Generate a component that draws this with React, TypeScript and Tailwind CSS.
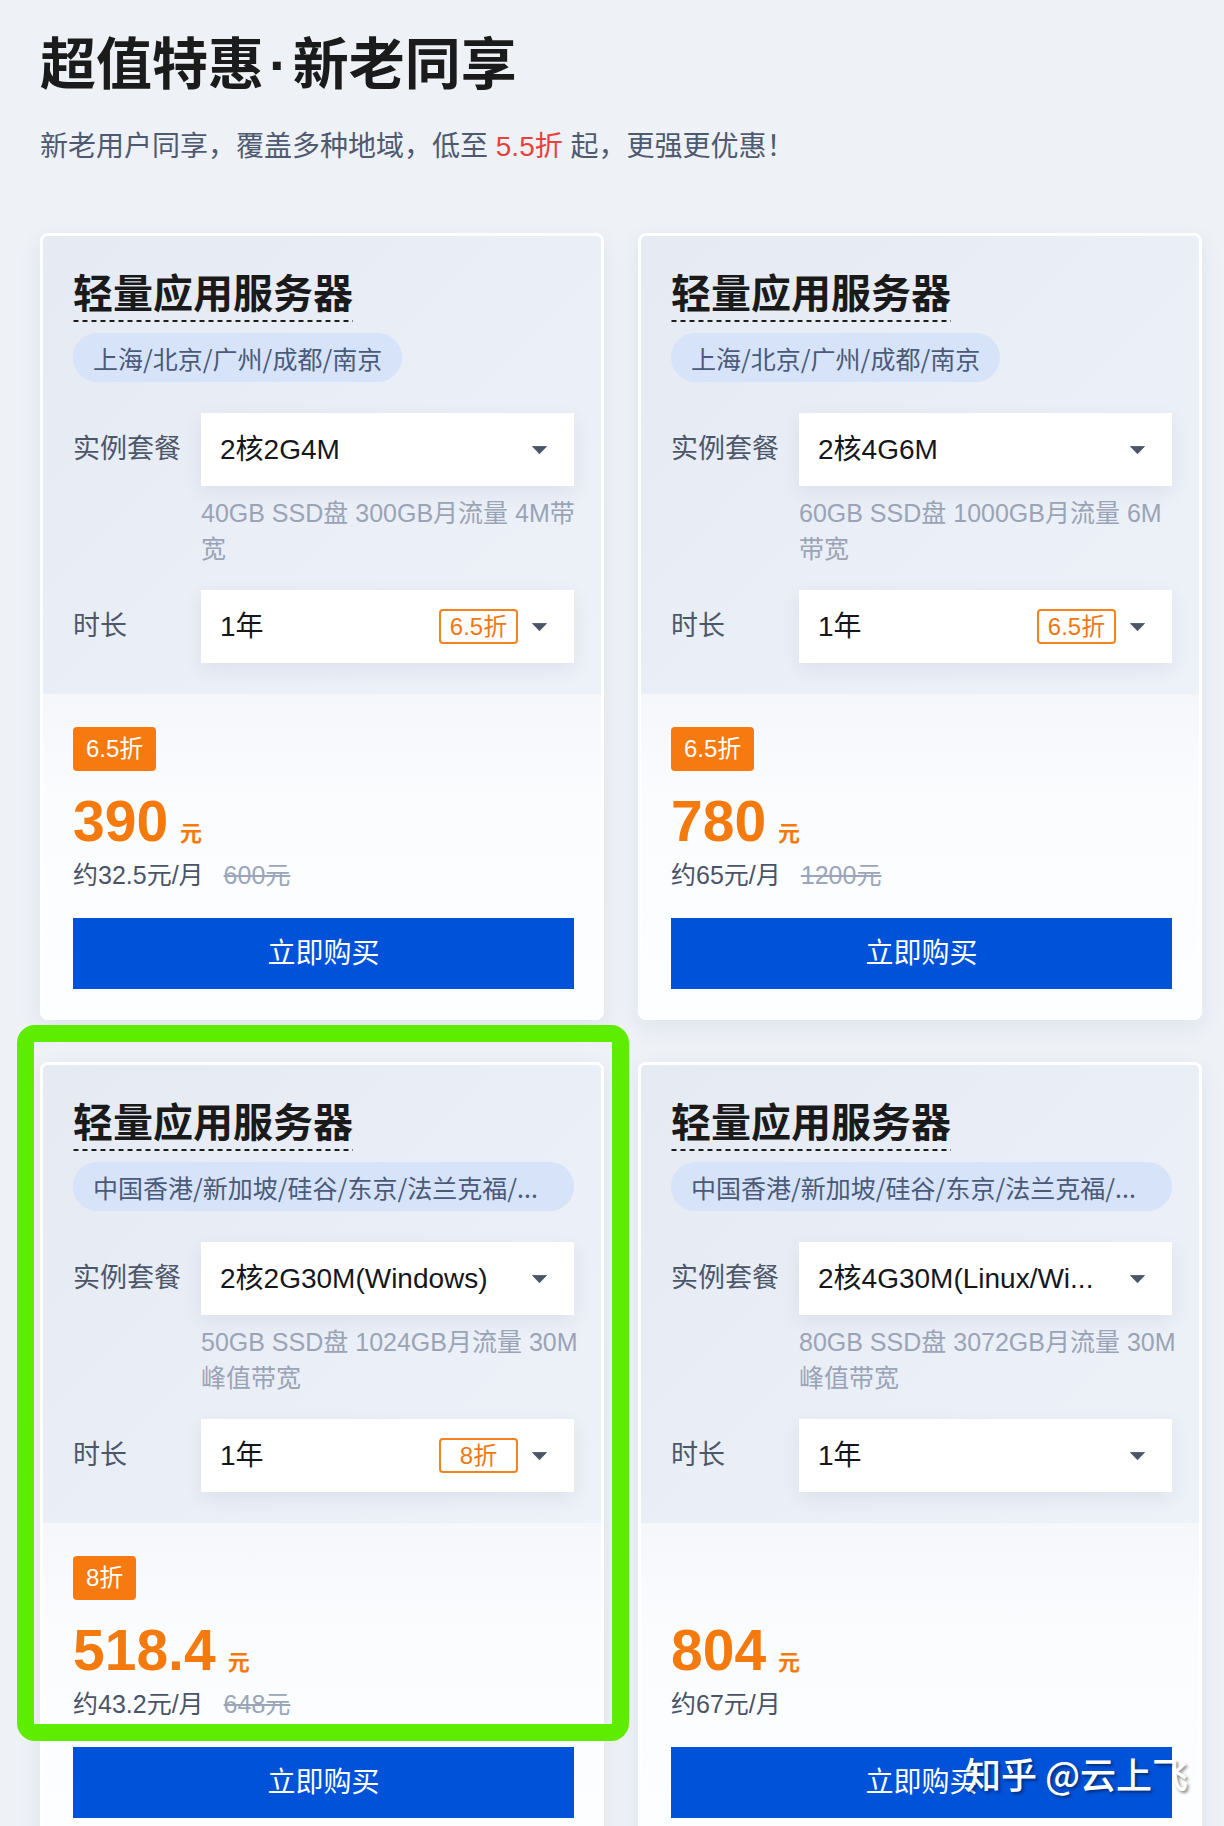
import React from "react";

type CardData = {
  regions: string;
  fullPill?: boolean;
  plan: string;
  spec: [string, string];
  durationBadge?: string;
  badge?: string;
  price: string;
  monthly: string;
  original?: string;
};

const cards: CardData[] = [
  {
    regions: "上海/北京/广州/成都/南京",
    plan: "2核2G4M",
    spec: ["40GB SSD盘 300GB月流量 4M带", "宽"],
    durationBadge: "6.5折",
    badge: "6.5折",
    price: "390",
    monthly: "约32.5元/月",
    original: "600元",
  },
  {
    regions: "上海/北京/广州/成都/南京",
    plan: "2核4G6M",
    spec: ["60GB SSD盘 1000GB月流量 6M", "带宽"],
    durationBadge: "6.5折",
    badge: "6.5折",
    price: "780",
    monthly: "约65元/月",
    original: "1200元",
  },
  {
    regions: "中国香港/新加坡/硅谷/东京/法兰克福/...",
    fullPill: true,
    plan: "2核2G30M(Windows)",
    spec: ["50GB SSD盘 1024GB月流量 30M", "峰值带宽"],
    durationBadge: "8折",
    badge: "8折",
    price: "518.4",
    monthly: "约43.2元/月",
    original: "648元",
  },
  {
    regions: "中国香港/新加坡/硅谷/东京/法兰克福/...",
    fullPill: true,
    plan: "2核4G30M(Linux/Wi...",
    spec: ["80GB SSD盘 3072GB月流量 30M", "峰值带宽"],
    price: "804",
    monthly: "约67元/月",
  },
];

function Caret() {
  return (
    <svg className="ml-[14px] shrink-0" width="15" height="8" viewBox="0 0 15 8">
      <path d="M0.5 0.5h14L7.5 7.8z" fill="#4b5567" stroke="#4b5567" strokeWidth="0.8" strokeLinejoin="round" />
    </svg>
  );
}

function Select({ value, badge }: { value: string; badge?: string }) {
  return (
    <div className="flex h-[73px] items-center bg-white pl-[19px] pr-[27px] shadow-[0_6px_18px_rgba(40,70,130,0.08)]">
      <span className="min-w-0 flex-1 whitespace-nowrap text-[28px] leading-[36px] text-[#15171c]">{value}</span>
      {badge && (
        <span className="ml-[12px] flex h-[35px] w-[79px] shrink-0 items-center justify-center rounded-[4px] border-2 border-[#f5821f] text-[24px] leading-[30px] text-[#f07812]">
          {badge}
        </span>
      )}
      <Caret />
    </div>
  );
}

function Card({ c }: { c: CardData }) {
  return (
    <div className="overflow-hidden rounded-[8px] border-[3px] border-white shadow-[0_8px_24px_rgba(30,60,120,0.07)]">
      <div className="bg-[linear-gradient(135deg,#e5eaf3_0%,#eaeef6_50%,#edf1f8_100%)] pb-[31px] pl-[30px] pr-[27px] pt-[34px]">
        <div className="inline-block bg-[linear-gradient(to_right,#1e1e1e_55%,transparent_55%)] bg-[length:9px_2px] bg-bottom bg-repeat-x pb-[4px]">
          <h2 className="text-[40px] font-bold leading-[48px] text-[#1a1a1a]">轻量应用服务器</h2>
        </div>
        <div className="mt-[11px]">
          <div
            className={
              c.fullPill
                ? "flex h-[49px] w-full items-center rounded-full bg-[#d6e3f9] px-[20px] font-['Noto_Sans_CJK_SC',sans-serif] text-[25px] leading-[32px] text-[#4a5a78]"
                : "inline-flex h-[49px] items-center rounded-full bg-[#d6e3f9] px-[20px] font-['Noto_Sans_CJK_SC',sans-serif] text-[25px] leading-[32px] text-[#4a5a78]"
            }
          >
            <span className="whitespace-nowrap">{c.regions}</span>
          </div>
        </div>
        <div className="mt-[31px] flex">
          <div className="flex h-[73px] w-[128px] shrink-0 items-center text-[27px] text-[#4d576a]">实例套餐</div>
          <div className="min-w-0 flex-1">
            <Select value={c.plan} />
            <div className="mt-[9px] text-[25px] leading-[36px] text-[#9aa4b6]">
              <div className="whitespace-nowrap">{c.spec[0]}</div>
              <div className="whitespace-nowrap">{c.spec[1]}</div>
            </div>
          </div>
        </div>
        <div className="mt-[23px] flex">
          <div className="flex h-[73px] w-[128px] shrink-0 items-center text-[27px] text-[#4d576a]">时长</div>
          <div className="min-w-0 flex-1">
            <Select value="1年" badge={c.durationBadge} />
          </div>
        </div>
      </div>
      <div className="bg-[linear-gradient(180deg,#f5f7fb_0%,#fbfcfe_35%,#fdfeff_100%)] pb-[28px] pl-[30px] pr-[27px] pt-[33px]">
        {c.badge ? (
          <div className="inline-flex h-[44px] items-center rounded-[4px] bg-[#f77a10] px-[13px] text-[24px] text-white">
            {c.badge}
          </div>
        ) : (
          <div className="h-[44px]" />
        )}
        <div className="mt-[22px] flex items-baseline">
          <span className="text-[57px] font-bold leading-[57px] text-[#f57a0e]">{c.price}</span>
          <span className="ml-[12px] text-[22px] font-bold text-[#f57a0e]">元</span>
        </div>
        <div className="mt-[7px] flex items-center text-[25px] leading-[36px]">
          <span className="text-[#4a5468]">{c.monthly}</span>
          {c.original && <span className="ml-[20px] text-[#9ba6b8] line-through">{c.original}</span>}
        </div>
        <button className="mt-[25px] flex h-[71px] w-full items-center justify-center bg-[#0052d9] text-[28px] text-white">
          立即购买
        </button>
      </div>
    </div>
  );
}

export default function App() {
  return (
    <div className="relative h-[1826px] w-[1224px] overflow-hidden bg-[#eef1f6] font-['Liberation_Sans','Noto_Sans_CJK_SC',sans-serif]">
      <div className="pl-[40px] pr-[22px] pt-[31px]">
        <h1 className="text-[56px] font-bold leading-[68px] text-[#1b1b1b]">
          超值特惠<span className="mx-[5px]">·</span>新老同享
        </h1>
        <p className="mt-[28px] text-[28px] leading-[40px] text-[#4e5a70]">
          新老用户同享，覆盖多种地域，低至 <span className="text-[#e8413f]">5.5折</span> 起，更强更优惠！
        </p>
        <div className="mt-[66px] grid grid-cols-2 gap-x-[34px] gap-y-[42px]">
          {cards.map((c, i) => (
            <Card key={i} c={c} />
          ))}
        </div>
      </div>
      <div className="pointer-events-none absolute left-[17px] top-[1025px] h-[716px] w-[612px] rounded-[18px] border-[17px] border-[#5eed00]" />
      <div className="pointer-events-none absolute left-[965px] top-[1751px] whitespace-nowrap font-['Noto_Sans_CJK_SC',sans-serif] text-[36px] font-medium leading-[44px] text-white [text-shadow:2px_2px_3px_rgba(0,0,0,0.45)]">
        知乎 @云上飞
      </div>
    </div>
  );
}
